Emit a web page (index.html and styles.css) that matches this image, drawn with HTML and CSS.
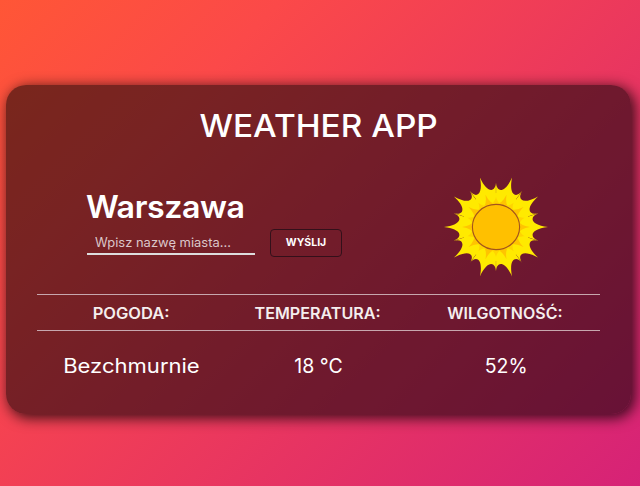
FILE: index.html
```html
<!DOCTYPE html>
<html lang="pl">
<head>
<meta charset="utf-8">
<title>Weather App</title>
<link rel="stylesheet" href="styles.css">
</head>
<body>
<main class="card">
  <h1 class="title"><span class="fit fit-title">WEATHER APP</span></h1>
  <section class="top">
    <div class="search">
      <h2 class="city"><span class="fit fit-city">Warszawa</span></h2>
      <div class="controls">
        <div class="field"><span class="fit fit-field">Wpisz nazwę miasta...</span></div>
        <button class="send">WYŚLIJ</button>
      </div>
    </div>
    <svg class="sun" viewBox="-53 -53 106 106">
      <defs>
        <path id="ray" d="M0 0L-13.7-42.5C-10.4-33-2-34 0-52C2-34 10.4-33 13.7-42.5Z"/>
        <path id="glow" d="M-7-22Q-1.5-24 0-34Q1.5-24 7-22Z"/>
        <path id="flare" d="M-6-22Q-1-25 0-30Q1-25 6-22Z"/>
      </defs>
      <circle r="34" fill="#ffea00"/>
      <g fill="#ffea00">
        <use href="#ray" transform="rotate(18)"/><use href="#ray" transform="rotate(54)"/><use href="#ray" transform="rotate(90)"/><use href="#ray" transform="rotate(126)"/><use href="#ray" transform="rotate(162)"/><use href="#ray" transform="rotate(198)"/><use href="#ray" transform="rotate(234)"/><use href="#ray" transform="rotate(270)"/><use href="#ray" transform="rotate(306)"/><use href="#ray" transform="rotate(342)"/>
      </g>
      <g fill="#ffc400">
        <use href="#glow" transform="rotate(18)"/><use href="#glow" transform="rotate(54)"/><use href="#glow" transform="rotate(90)"/><use href="#glow" transform="rotate(126)"/><use href="#glow" transform="rotate(162)"/><use href="#glow" transform="rotate(198)"/><use href="#glow" transform="rotate(234)"/><use href="#glow" transform="rotate(270)"/><use href="#glow" transform="rotate(306)"/><use href="#glow" transform="rotate(342)"/>
      </g>
      <g fill="#ffd400">
        <use href="#flare"/><use href="#flare" transform="rotate(36)"/><use href="#flare" transform="rotate(72)"/><use href="#flare" transform="rotate(108)"/><use href="#flare" transform="rotate(144)"/><use href="#flare" transform="rotate(180)"/><use href="#flare" transform="rotate(216)"/><use href="#flare" transform="rotate(252)"/><use href="#flare" transform="rotate(288)"/><use href="#flare" transform="rotate(324)"/>
      </g>
      <ellipse rx="23.6" ry="22.6" fill="#ffc000" stroke="#a4541c" stroke-width="1.1"/>
    </svg>
  </section>
  <section class="heads">
    <div><span class="fit fit-h1">POGODA:</span></div>
    <div><span class="fit fit-h2">TEMPERATURA:</span></div>
    <div><span class="fit fit-h3">WILGOTNOŚĆ:</span></div>
  </section>
  <section class="values">
    <div><span class="fit fit-v1">Bezchmurnie</span></div>
    <div><span>18 °C</span></div>
    <div><span>52%</span></div>
  </section>
</main>
</body>
</html>
```
FILE: styles.css
```css
* { box-sizing: border-box; }
body {
  margin: 0;
  height: 486px;
  padding: 85px 9px 0 6px;
  overflow: hidden;
  background: linear-gradient(135deg, #ff5636 0%, #fb4949 25%, #d62277 100%);
  color: #fff;
  font-family: Inter, "Open Sans", sans-serif;
}
.card {
  height: 329px;
  padding: 0 31px;
  border-radius: 20px;
  background: rgba(0, 0, 0, .52);
  box-shadow: 3px 3px 14px 1px rgba(0, 0, 0, .75);
}
.fit { display: inline-block; white-space: nowrap; }
.fit-title { transform: scaleX(1.077); }
.fit-city { transform: translateX(-1px) scaleX(1.037); transform-origin: left; }
.fit-field { transform: scaleX(1.035); transform-origin: left; }
.fit-h1 { transform: scaleX(1.065); }
.fit-h2 { transform: translateX(-1px) scaleX(1.04); }
.fit-h3 { transform: translateX(-1px) scaleX(1.03); }
.fit-v1 { transform: translateX(1px) scaleX(1.13); }
.title {
  margin: 0;
  padding-top: 21px;
  height: 80px;
  font-size: 31px;
  line-height: 40px;
  font-weight: 500;
  text-align: center;
}
.top { display: flex; justify-content: space-between; height: 129px; padding: 0 51px 0 50px; }
.city { margin: 0; padding-top: 22px; font-size: 31px; line-height: 40px; font-weight: 600; letter-spacing: -.4px; }
.controls { display: flex; align-items: flex-start; gap: 15px; margin-top: 2px; }
.field {
  width: 168px;
  height: 26px;
  padding-left: 8px;
  border-bottom: 2px solid #ddd;
  color: #dbc6c9;
  font-size: 12.5px;
  line-height: 27px;
}
.send {
  width: 72px;
  height: 28px;
  padding: 0;
  border: 1px solid #33101a;
  border-radius: 4px;
  background: transparent;
  color: #fff;
  font: 700 10.5px/26px Inter, sans-serif;
}
.sun { width: 106px; height: 106px; margin-top: 9px; }
.heads, .values { display: grid; grid-template-columns: repeat(3, 1fr); text-align: center; }
.heads {
  height: 37px;
  border-top: 1px solid #c7a7ae;
  border-bottom: 1px solid #c7a7ae;
  color: #f5eeee;
  font-size: 15.5px;
  line-height: 37px;
  font-weight: 600;
}
.values { padding-top: 20px; font-size: 19.5px; line-height: 30px; }
```
